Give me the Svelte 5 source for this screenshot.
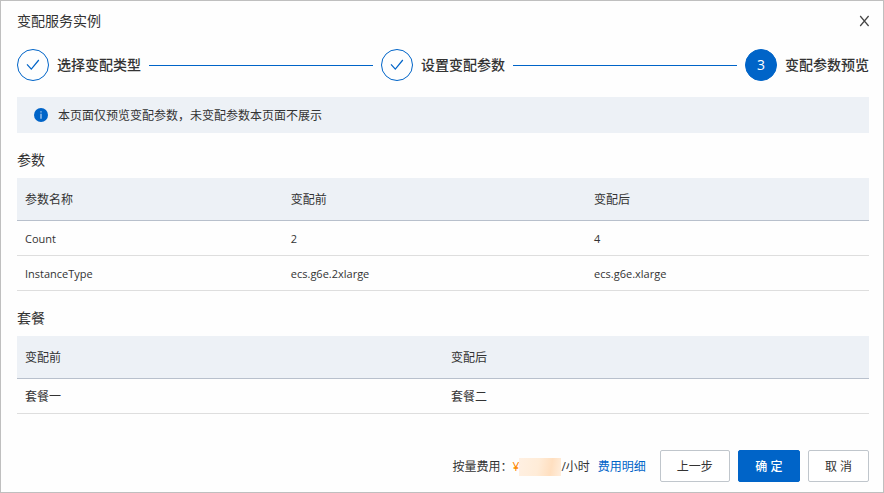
<script lang="ts">
    type Step = { title: string; done: boolean };
    type Table = { title: string; columns: string[]; rows: string[][]; kind: string };

    const steps: Step[] = [
        { title: "选择变配类型", done: true },
        { title: "设置变配参数", done: true },
        { title: "变配参数预览", done: false },
    ];
    const tables: Table[] = [
        {
            title: "参数",
            kind: "params",
            columns: ["参数名称", "变配前", "变配后"],
            rows: [
                ["Count", "2", "4"],
                ["InstanceType", "ecs.g6e.2xlarge", "ecs.g6e.xlarge"],
            ],
        },
        {
            title: "套餐",
            kind: "package",
            columns: ["变配前", "变配后"],
            rows: [["套餐一", "套餐二"]],
        },
    ];
</script>

<div class="dialog" role="dialog" aria-labelledby="dialog-title">
    <header>
        <h1 id="dialog-title">变配服务实例</h1>
        <button type="button" class="close" aria-label="关闭">
            <svg width="10" height="12" viewBox="0 0 10 12">
                <path d="M1.2 1l8.4 10M9.6 1L1.2 11" fill="none" stroke="#444" stroke-width="1.2" />
            </svg>
        </button>
    </header>

    <ol class="steps">
        {#each steps as step, i}
            {#if i > 0}
                <li class="line" aria-hidden="true"></li>
            {/if}
            <li class="step">
                <span class="circle" class:done={step.done}>
                    {#if step.done}
                        <svg width="14" height="12" viewBox="0 0 14 12">
                            <path d="M1 5.4l4.3 4.8L12.8 1" fill="none" stroke="#0064c8" stroke-width="1.2" />
                        </svg>
                    {:else}
                        {i + 1}
                    {/if}
                </span>
                <span>{step.title}</span>
            </li>
        {/each}
    </ol>

    <div class="notice">
        <svg width="14" height="14" viewBox="0 0 14 14" aria-hidden="true">
            <circle cx="7" cy="7" r="7" fill="#0064c8" />
            <path d="M7 3.3v1.3M7 5.8v4.9" stroke="#b9d5f2" stroke-width="1.2" />
        </svg>
        <p>本页面仅预览变配参数，未变配参数本页面不展示</p>
    </div>

    {#each tables as table}
        <h2 id={table.kind}>{table.title}</h2>
        <table class={table.kind} aria-labelledby={table.kind}>
            <thead>
                <tr>
                    {#each table.columns as column}
                        <th scope="col">{column}</th>
                    {/each}
                </tr>
            </thead>
            <tbody>
                {#each table.rows as row}
                    <tr>
                        {#each row as cell}
                            <td>{cell}</td>
                        {/each}
                    </tr>
                {/each}
            </tbody>
        </table>
    {/each}

    <footer>
        <div class="price">
            <span>按量费用：</span>
            <span class="currency">¥</span>
            <span class="mask"></span>
            <span>/小时</span>
        </div>
        <a href="#detail">费用明细</a>
        <button type="button">上一步</button>
        <button type="button" class="primary">确 定</button>
        <button type="button">取 消</button>
    </footer>
</div>

<style>
    :global(body) {
        margin: 0;
        background: #fefefe;
    }
    .dialog {
        box-sizing: border-box;
        min-height: 100vh;
        padding: 8px 14px 10px 16px;
        border: 1px solid #bfbfbf;
        font-family: "Open Sans", "Noto Sans CJK SC", sans-serif;
        font-size: 12px;
        line-height: 18px;
        color: #333;
    }
    header {
        display: flex;
        align-items: center;
        justify-content: space-between;
        height: 22px;
    }
    h1,
    h2 {
        margin: 0;
        font-size: 14px;
        font-weight: 400;
        line-height: 21px;
    }
    h2 {
        margin: 16px 0 8px;
    }
    .close {
        display: flex;
        padding: 2px 0 0;
        border: none;
        background: none;
        cursor: pointer;
    }
    .close svg {
        overflow: visible;
    }
    .steps {
        display: flex;
        align-items: center;
        gap: 8px;
        margin: 18px 0 16px;
        padding: 0;
        list-style: none;
    }
    .step {
        display: flex;
        align-items: center;
        gap: 8px;
        font-size: 14px;
        font-weight: 500;
    }
    .line {
        flex: 1;
        height: 1px;
        background: #0064c8;
    }
    .circle {
        display: flex;
        align-items: center;
        justify-content: center;
        box-sizing: border-box;
        width: 32px;
        height: 32px;
        border: 1px solid #0064c8;
        border-radius: 50%;
        background: #0064c8;
        color: white;
        font-weight: 400;
    }
    .circle.done {
        background: none;
    }
    .notice {
        display: flex;
        align-items: center;
        gap: 10px;
        height: 36px;
        padding: 0 17px;
        background: #edf1f6;
    }
    .notice p {
        margin: 0;
        padding-top: 2px;
    }
    table {
        width: 100%;
        table-layout: fixed;
        border-spacing: 0;
    }
    th,
    td {
        box-sizing: border-box;
        padding: 2px 8px 0;
        text-align: left;
        font-weight: 400;
    }
    th {
        height: 43px;
        border-bottom: 1px solid #b8c0cc;
        background: #edf1f6;
    }
    td {
        height: 35px;
        border-bottom: 1px solid #dedede;
    }
    .params th:nth-child(1) {
        width: 31.2%;
    }
    .params th:nth-child(2) {
        width: 35.6%;
    }
    .params td {
        font-size: 11px;
    }
    footer {
        display: flex;
        align-items: center;
        justify-content: flex-end;
        gap: 8px;
        margin-top: 36px;
    }
    .price {
        display: flex;
        align-items: center;
    }
    .price,
    footer a {
        padding-top: 2px;
    }
    .currency {
        color: #ff8a00;
    }
    .mask {
        width: 42px;
        height: 18px;
        background: linear-gradient(100deg, #fff0e2, #ffecd8 45%, #ffdfc0 75%, #ffeedd);
    }
    a {
        margin-right: 6px;
        color: #0064c8;
        text-decoration: none;
    }
    footer button {
        height: 32px;
        padding: 2px 16px 0;
        border: 1px solid #c0c6cc;
        border-radius: 2px;
        background: white;
        color: #333;
        font: inherit;
        cursor: pointer;
    }
    footer .primary {
        min-width: 62px;
        border-color: #0064c8;
        background: #0064c8;
        color: white;
        font-weight: 500;
    }
</style>
